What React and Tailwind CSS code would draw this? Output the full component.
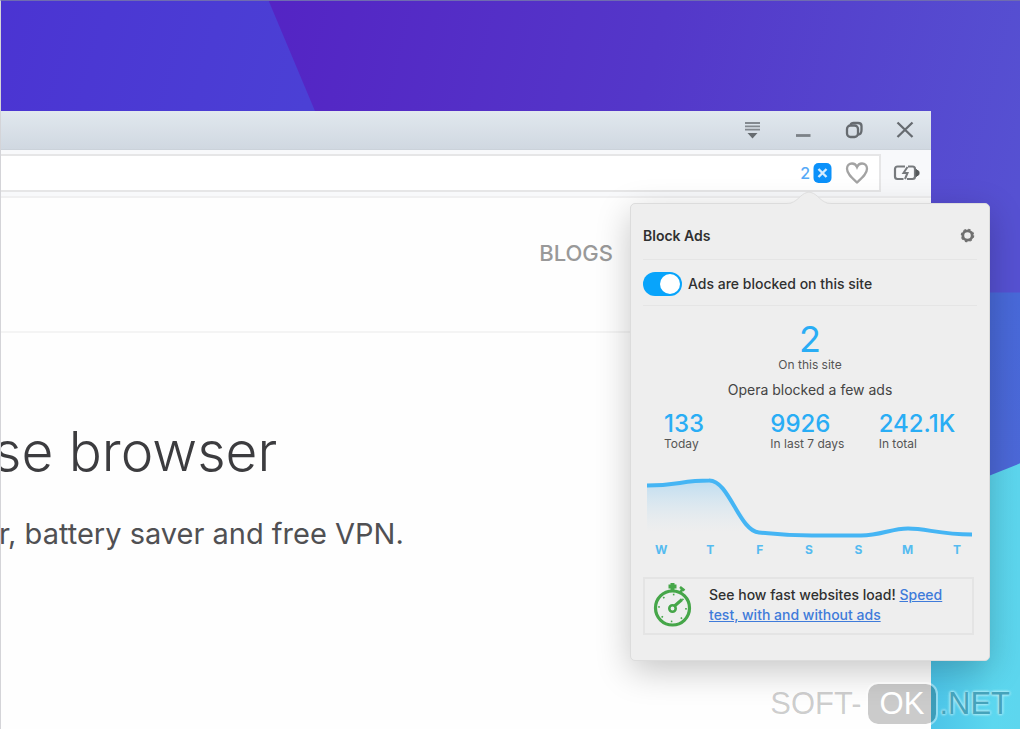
import React from 'react';

function Backdrop() {
  return (
    <svg
      className="absolute inset-0 h-full w-full"
      viewBox="0 0 1020 729"
      preserveAspectRatio="none"
      aria-hidden="true"
    >
      <defs>
        <linearGradient id="violet" x1="270" y1="0" x2="1020" y2="180" gradientUnits="userSpaceOnUse">
          <stop offset="0" stopColor="#5424c4" />
          <stop offset="0.5" stopColor="#5437c9" />
          <stop offset="1" stopColor="#5651d2" />
        </linearGradient>
        <linearGradient id="indigo" x1="0" y1="0" x2="310" y2="90" gradientUnits="userSpaceOnUse">
          <stop offset="0" stopColor="#4b34d2" />
          <stop offset="1" stopColor="#4b40d5" />
        </linearGradient>
        <linearGradient id="blue" x1="0" y1="290" x2="0" y2="475" gradientUnits="userSpaceOnUse">
          <stop offset="0" stopColor="#4869d9" />
          <stop offset="1" stopColor="#4c68d8" />
        </linearGradient>
        <linearGradient id="cyan" x1="930" y1="0" x2="1020" y2="0" gradientUnits="userSpaceOnUse">
          <stop offset="0" stopColor="#4cc4e8" />
          <stop offset="0.7" stopColor="#5cd7ef" />
          <stop offset="1" stopColor="#5dd6ee" />
        </linearGradient>
      </defs>
      <rect width="1020" height="729" fill="url(#violet)" />
      <path d="M0 0H268L315 112H0Z" fill="url(#indigo)" />
      <path d="M900 292H1020V729H900Z" fill="url(#blue)" />
      <path d="M900 511L1020 463V729H900Z" fill="url(#cyan)" />
    </svg>
  );
}

function TitleBar() {
  const button = 'flex h-6 w-6 items-center justify-center text-[#666b70]';
  return (
    <header className="flex h-[39px] items-center justify-end gap-[27px] border-b border-[#cbd2da] bg-linear-to-b from-[#e1e8ee] to-[#d0d8e1] pr-[14px]">
      <button className={button} aria-label="Tab menu">
        <svg width="18" height="20" viewBox="0 0 18 20" fill="none" stroke="currentColor">
          <path d="M2 3H17M2 6.300H17M2 9.600H17" strokeWidth="1.800" opacity="0.75" />
          <path d="M4.500 13H14.500L9.500 18.500Z" fill="currentColor" stroke="none" />
        </svg>
      </button>
      <button className={button} aria-label="Minimize">
        <svg width="16" height="18" viewBox="0 0 16 18">
          <path d="M1 14.500H15.500" stroke="currentColor" strokeWidth="2.800" opacity="0.8" />
        </svg>
      </button>
      <button className={button} aria-label="Restore">
        <svg width="18" height="18" viewBox="0 0 18 18" fill="none" stroke="currentColor" strokeWidth="2.300">
          <rect x="2" y="4.500" width="11" height="11.500" rx="3.500" />
          <path d="M5.500 4C6 2.500 7 2 8.500 2H13C15.500 2 16.500 3 16.500 5V9C16.500 11.500 15.500 13.500 13 13.500" />
        </svg>
      </button>
      <button className={button} aria-label="Close">
        <svg width="18" height="18" viewBox="0 0 18 18" stroke="currentColor" strokeWidth="2.300">
          <path d="M1.500 1.500L16.500 16M16.500 1.500L1.500 16" />
        </svg>
      </button>
    </header>
  );
}

function Toolbar() {
  return (
    <div className="flex h-12 items-center border-b-2 border-[#f0f0f1] bg-[#f8f9fb] pr-[11px]">
      <div className="flex h-[38px] min-w-0 flex-1 items-center border-2 border-l-0 border-[#e6e6e7] bg-white pr-[10px]">
        <input aria-label="Address" className="h-full min-w-0 flex-1 bg-transparent outline-none" />
        <button className="flex items-center gap-[3px] text-base leading-6 font-medium text-[#56a9f7]" aria-label="2 ads blocked">
          <span>2</span>
          <svg width="19" height="22" viewBox="0 0 19 22">
            <rect x="0.500" y="1" width="18" height="20" rx="5" fill="#0b91fa" />
            <path d="M5.500 7L13.500 15M13.500 7L5.500 15" stroke="#d3ecff" strokeWidth="2.400" />
          </svg>
        </button>
        <button className="ml-[13px]" aria-label="Bookmark">
          <svg width="24" height="24" viewBox="0 0 24 24" fill="none" stroke="#a3a3a3" strokeWidth="2.300">
            <path d="M12 21.500C7 17 2 13 2 7.800C2 4.500 4.200 2.500 7 2.500C9.500 2.500 11.200 4 12 6C12.800 4 14.500 2.500 17 2.500C19.800 2.500 22 4.500 22 7.800C22 13 17 17 12 21.500Z" />
          </svg>
        </button>
      </div>
      <button className="ml-3" aria-label="Battery saver">
        <svg width="27" height="18" viewBox="0 0 27 18" fill="none" stroke="#777a7d" strokeWidth="2.200">
          <path d="M12 2.500H4.500C3 2.500 2 3.500 2 5V12.500C2 14 3 15 4.500 15H10.500M15 2.500H19.500C21 2.500 22 3.500 22 5V12.500C22 14 21 15 19.500 15H14" />
          <path d="M14.500 3L10.500 9H14.500L12 15" strokeWidth="2" />
          <path d="M23 5.500L26 7.500V10.500L23 12.500Z" fill="#55585b" stroke="#55585b" strokeWidth="1" />
        </svg>
      </button>
    </div>
  );
}

function Page() {
  return (
    <main className="flex-1 bg-[#fefefe]">
      <nav className="flex h-[135px] justify-end border-b-2 border-[#f4f4f4] pt-10 pr-[318px]">
        <a href="#blogs" className="text-[22px] leading-[30px] font-medium text-[#999999]">BLOGS</a>
      </nav>
      <h1 className="-ml-2 pt-[86px] text-[55px] leading-16 font-light whitespace-nowrap text-[#3c3c3f]">
        se browser
      </h1>
      <p className="-ml-0.5 pt-[31px] text-[29px] leading-10 whitespace-nowrap text-[#505053]">
        r, battery saver and free VPN.
      </p>
    </main>
  );
}

const totals = [
  { value: '133', label: 'Today', pad: 'pl-[21px]' },
  { value: '9926', label: 'In last 7 days', pad: 'pl-4' },
  { value: '242.1K', label: 'In total', pad: 'pl-[13px]' },
];

const days = ['W', 'T', 'F', 'S', 'S', 'M', 'T'];

function AdsPanel() {
  return (
    <section
      aria-label="Block Ads"
      className="absolute top-[202px] right-[30px] w-[360px] rounded-[5px] border border-[#dcdcdc] bg-[#eeeeee] px-3 pb-[25px] text-[#303030] shadow-[0_10px_34px_rgba(0,0,0,0.22)]"
    >
      <svg className="absolute -top-[13px] left-[156px]" width="44" height="14" viewBox="0 0 44 14" aria-hidden="true">
        <path
          d="M0 13C10 13 13 3 20 1.500C21.500 1 22.500 1 24 1.500C31 3 34 13 44 13V14H0Z"
          fill="#eeeeee"
        />
        <path
          d="M0 12.500C10 12.500 13 3 20 1.500C21.500 1 22.500 1 24 1.500C31 3 34 12.500 44 12.500"
          fill="none"
          stroke="#dfdfdf"
        />
      </svg>
      <header className="flex h-14 items-center justify-between border-b border-[#e5e5e5] pt-2 pr-[2px]">
        <h2 className="text-sm leading-5 font-semibold">Block Ads</h2>
        <button aria-label="Settings">
          <svg width="15" height="15" viewBox="0 0 16 16" fill="none" stroke="#707070">
            <circle cx="8" cy="8" r="5" strokeWidth="3" />
            <circle cx="8" cy="8" r="6.600" strokeWidth="1.200" strokeDasharray="2.590" />
          </svg>
        </button>
      </header>
      <label className="flex h-[46px] items-center gap-[6px] border-b border-[#e5e5e5] pt-[3px] text-sm leading-5 font-medium">
        <input type="checkbox" role="switch" defaultChecked className="peer sr-only" />
        <span className="flex h-6 w-[39px] items-center justify-start rounded-full bg-[#b5b5b5] px-[2px] peer-checked:justify-end peer-checked:bg-[#08a4fb]">
          <span className="h-5 w-5 rounded-full bg-white" />
        </span>
        Ads are blocked on this site
      </label>
      <div className="flex flex-col items-center pt-[14px]">
        <strong className="text-[36px] leading-[38px] font-normal text-[#29adf5]">2</strong>
        <span className="text-xs leading-[14px] text-[#555555]">On this site</span>
        <p className="pt-2 text-sm leading-5 text-[#444444]">Opera blocked a few ads</p>
      </div>
      <dl className="grid grid-cols-3 pt-[11px]">
        {totals.map((t) => (
          <div key={t.label} className={`flex flex-col-reverse whitespace-nowrap ${t.pad}`}>
            <dt className="text-xs leading-[14px] text-[#555555]">{t.label}</dt>
            <dd className="text-2xl leading-[26px] font-medium text-[#29adf5]">{t.value}</dd>
          </div>
        ))}
      </dl>
      <svg className="mt-[23px] ml-1 block h-[66px] w-[325px]" viewBox="0 0 325 66" role="img" aria-label="Blocked ads by day">
        <defs>
          <linearGradient id="area" x1="0" y1="0" x2="0" y2="1">
            <stop offset="0" stopColor="#9fd2f2" stopOpacity="0.6" />
            <stop offset="1" stopColor="#cfe4f2" stopOpacity="0" />
          </linearGradient>
        </defs>
        <path d="M0 12C30 12 35 7 64 7C76 7 85 30 104 50L112 58H0Z" fill="url(#area)" />
        <path
          d="M0 11.500C30 11.500 35 6.500 62 6.500C82 6 92 57 112 58.500C125 60 140 61.500 165 61.500H214C234 61.500 244 54.500 261 54.500C280 54.500 292 60.500 325 60.500"
          fill="none"
          stroke="#45b5f4"
          strokeWidth="4"
        />
      </svg>
      <div className="flex justify-between pt-[2px] pr-[14px] pl-3 text-xs leading-4 font-bold text-[#55bbf0]">
        {days.map((d, i) => (
          <span key={i} className="w-3 text-center">{d}</span>
        ))}
      </div>
      <div className="mt-[19px] mr-[3px] flex items-center border-2 border-[#e4e4e4] pt-[3px] pb-[5px] pl-2">
        <svg width="42" height="46" viewBox="0 0 42 46" fill="none" stroke="#46a649" className="shrink-0">
          <circle cx="19.500" cy="26" r="17" strokeWidth="3.200" />
          <circle cx="19.500" cy="26" r="13.500" strokeWidth="1.600" strokeDasharray="1.600 9" />
          <path d="M15.500 4.500H23.500" strokeWidth="4" />
          <path d="M19.500 1V9" strokeWidth="4" />
          <path d="M27 5L31.500 8.500M29.500 6L27.500 11" strokeWidth="2.600" />
          <path d="M21.500 24L29 17.500" strokeWidth="3" />
          <circle cx="19.500" cy="26.500" r="3.200" strokeWidth="2.600" />
        </svg>
        <p className="ml-[14px] text-sm leading-5 font-medium">
          See how fast websites load!{' '}
          <a href="#speed-test" className="text-[#3f7bda] underline">
            Speed test, with and without ads
          </a>
        </p>
      </div>
    </section>
  );
}

function Watermark() {
  return (
    <div className="absolute right-[10px] bottom-[5px] flex items-center font-['Liberation_Sans',Arial,sans-serif] text-[31px] leading-10 text-black/20">
      <span>SOFT-</span>
      <span className="ml-[6px] rounded-[10px] bg-black/20 px-3 text-white outline-2 outline-white/40">OK</span>
      <span className="ml-[3px] text-[#45a3bb] [text-shadow:0_0_3px_#b5ecf7,0_0_3px_#b5ecf7,0_0_3px_#b5ecf7]">.NET</span>
    </div>
  );
}

export default function App() {
  return (
    <div className="relative flex min-h-screen flex-col overflow-hidden border-t border-l border-t-[#6f6cb0] border-l-[#d4d4d8] font-['Inter','Liberation_Sans',sans-serif]">
      <Backdrop />
      <div className="relative mt-[110px] mr-[89px] flex flex-1 flex-col">
        <TitleBar />
        <Toolbar />
        <Page />
      </div>
      <AdsPanel />
      <Watermark />
    </div>
  );
}
